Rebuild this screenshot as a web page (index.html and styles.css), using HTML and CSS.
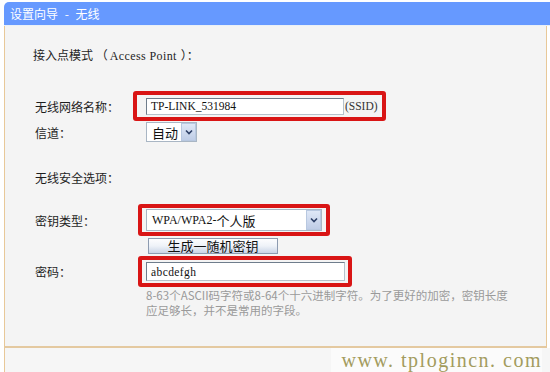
FILE: index.html
```html
<!DOCTYPE html>
<html lang="zh-CN">
<head>
<meta charset="utf-8">
<title>设置向导 - 无线</title>
<link rel="stylesheet" href="styles.css">
</head>
<body>
<div class="titlebar">设置向导 - 无线</div>
<div class="content">
  <div class="heading">接入点模式 （<span class="latin">Access Point</span>）：</div>

  <div class="row r-ssid">
    <div class="label">无线网络名称：</div>
    <div class="mark mark-ssid">
      <div class="field field-ssid">TP-LINK_531984</div>
      <span class="suffix">(SSID)</span>
    </div>
  </div>

  <div class="row r-channel">
    <div class="label">信道：</div>
    <div class="select select-channel">
      <span class="select-text">自动</span>
      <span class="arrow"><svg width="8" height="6" viewBox="0 0 8 6"><polyline points="1,1.5 4,4.5 7,1.5" fill="none" stroke="#2d3f66" stroke-width="1.6"/></svg></span>
    </div>
  </div>

  <div class="row r-sec">
    <div class="label">无线安全选项：</div>
  </div>

  <div class="row r-type">
    <div class="label">密钥类型：</div>
    <div class="mark mark-type">
      <div class="select select-type">
        <span class="select-text"><span class="serif">WPA/WPA2-</span>个人版</span>
        <span class="arrow"><svg width="8" height="6" viewBox="0 0 8 6"><polyline points="1,1.5 4,4.5 7,1.5" fill="none" stroke="#2d3f66" stroke-width="1.6"/></svg></span>
      </div>
    </div>
  </div>

  <div class="row r-btn">
    <div class="label"></div>
    <div class="button">生成一随机密钥</div>
  </div>

  <div class="row r-pwd">
    <div class="label">密码：</div>
    <div class="mark mark-pwd">
      <div class="field field-pwd">abcdefgh</div>
    </div>
  </div>

  <div class="help">
    <div>8-63个ASCII码字符或8-64个十六进制字符。为了更好的加密，密钥长度</div>
    <div>应足够长，并不是常用的字段。</div>
  </div>
</div>
<div class="footer">
  <span class="watermark">www. tplogincn. com</span>
</div>
</body>
</html>
```

FILE: styles.css
```css
html, body {
  margin: 0;
  padding: 0;
}
body {
  width: 550px;
  height: 372px;
  overflow: hidden;
  background: #ffffff;
  font-family: "Noto Sans CJK SC", sans-serif;
  font-size: 12px;
  color: #1e1e1e;
}

.titlebar {
  margin: 2px 0 0 4px;
  height: 23px;
  line-height: 23px;
  padding-left: 6px;
  background: #6699ff;
  color: #ffffff;
  font-size: 12px;
  word-spacing: 4px;
  border-radius: 5px 0 0 0;
  border-bottom: 1px solid #eaf0f6;
}

.content {
  margin: 0 3px 0 4px;
  border-left: 1px solid #e8c898;
  border-right: 1px solid #e8c898;
  border-bottom: 2px solid #e4c9a0;
  background: #f4f4f4;
  padding: 19px 0 28px 30px;
}

.heading {
  height: 20px;
  line-height: 20px;
  margin-left: -2px;
}
.latin {
  font-family: "Liberation Serif", serif;
  font-size: 12px;
  letter-spacing: 0.4px;
  margin: 0 4px 0 2px;
}
.serif {
  font-family: "Liberation Serif", serif;
  font-size: 12px;
}

.row {
  display: flex;
  align-items: center;
}
.label {
  width: 111px;
  flex: none;
}

.r-ssid { margin-top: 26px; height: 30px; }
.r-channel { height: 22px; }
.r-sec { margin-top: 24px; height: 20px; }
.r-type { margin-top: 17px; height: 32px; }
.r-btn { margin-top: 1px; height: 17px; }
.r-pwd { margin-top: 2px; height: 31px; }

.mark {
  box-sizing: border-box;
  display: flex;
  align-items: center;
  border: 4px solid #d91515;
  border-radius: 3px;
  height: 100%;
}
.mark-ssid {
  margin-left: -13px;
  padding: 0 4px 0 9px;
}
.mark-type {
  margin-left: -8px;
  padding: 0 4px 0 4px;
}
.mark-pwd {
  margin-left: -8px;
  padding: 0 3px 0 4px;
}

.field {
  box-sizing: border-box;
  background: #ffffff;
  border: 1px solid #6f7d8c;
  border-right-color: #b6c2cc;
  border-bottom-color: #b6c2cc;
  font-family: "Liberation Serif", serif;
  font-size: 11.5px;
  color: #111;
  padding-left: 4px;
  display: flex;
  align-items: center;
}
.field-ssid {
  width: 198px;
  height: 17px;
}
.field-pwd {
  width: 199px;
  height: 19px;
  letter-spacing: 0.4px;
}
.suffix {
  font-family: "Liberation Serif", serif;
  font-size: 11.5px;
  color: #333;
  margin-left: 1px;
}

.select {
  box-sizing: border-box;
  display: flex;
  align-items: stretch;
  background: #ffffff;
  border: 1px solid #a9b6c4;
}
.select-text {
  flex: 1;
  display: flex;
  align-items: center;
  padding-left: 5px;
  color: #111;
}
.select-channel {
  width: 51px;
  height: 20px;
  font-size: 13px;
}
.select-type {
  width: 176px;
  height: 22px;
  font-size: 13px;
}
.arrow {
  width: 15px;
  flex: none;
  display: flex;
  align-items: center;
  justify-content: center;
  background: linear-gradient(#dfe8f7, #bfcde6);
  border: 1px solid #b8c8e0;
  box-sizing: border-box;
}

.button {
  box-sizing: border-box;
  margin-left: 2px;
  width: 130px;
  height: 16px;
  border: 1px solid #8d9bb0;
  background: linear-gradient(#fdfdfe 0%, #eef2f8 50%, #c9d4e6 100%);
  font-size: 13px;
  line-height: 14px;
  text-align: center;
  color: #111;
}

.help {
  margin-top: 1px;
  padding-left: 111px;
  font-size: 11.5px;
  line-height: 15px;
  color: #9a9a9a;
}

.footer {
  margin-left: 4px;
  border-left: 1px solid #e8c898;
  height: 24px;
  background: #f6f6f6;
  display: flex;
  justify-content: flex-end;
  padding-right: 8px;
}
.watermark {
  background: #fbfbfb;
  padding-left: 10px;
  font-family: "Liberation Serif", serif;
  font-size: 20px;
  letter-spacing: 1.5px;
  line-height: 24px;
  color: #a39c5e;
}
```
